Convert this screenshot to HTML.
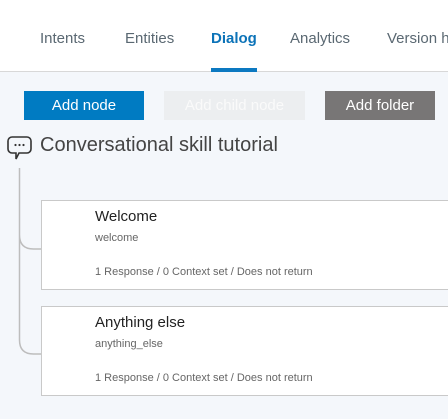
<!DOCTYPE html><html><head><style>
html{overflow:hidden}
body{margin:0;width:448px;height:419px;background:#f4f7fb;font-family:"Liberation Sans",sans-serif;position:relative;overflow:hidden}
.hd{position:absolute;left:0;top:0;width:448px;height:71px;background:#fff;border-bottom:1px solid #d8d8d8}
.t{position:absolute;top:30px;font-size:15px;color:#5a6872;white-space:nowrap}
.b{position:absolute;top:91px;height:29px;line-height:29px;text-align:center;font-size:15px;color:#fff}
.c{position:absolute;left:41px;width:406px;border-right:none;background:#fff;border:1px solid #c9c9c9;border-right:none;height:88px}
.c .n{position:absolute;left:53px;top:7px;font-size:15px;color:#222}
.c .s{position:absolute;left:53px;top:31px;font-size:11px;color:#666}
.c .f{position:absolute;left:53px;top:65px;font-size:11px;color:#666}
</style></head><body>
<div class="hd">
<div class="t" style="left:40px">Intents</div>
<div class="t" style="left:125px">Entities</div>
<div class="t" style="left:211px;color:#0c73b8;font-weight:bold">Dialog</div>
<div class="t" style="left:290px">Analytics</div>
<div class="t" style="left:387px;width:61px;overflow:hidden">Version history</div>
<div style="position:absolute;left:211px;top:68px;width:46px;height:4px;background:#0c79c1"></div>
</div>
<div class="b" style="left:24px;width:120px;background:#007bc2">Add node</div>
<div class="b" style="left:164px;width:141px;background:#eceef0;color:#fafafa">Add child node</div>
<div class="b" style="left:325px;width:110px;background:#787676">Add folder</div>
<svg style="position:absolute;left:7px;top:135px" width="28" height="26" viewBox="0 0 28 26"><path d="M5 2h15a4 4 0 0 1 4 4v8a4 4 0 0 1-4 4h-8l-3 6v-6H5a4 4 0 0 1-4-4V6a4 4 0 0 1 4-4z" fill="none" stroke="#333" stroke-width="1.6"/><circle cx="8.5" cy="10" r="1.1" fill="#333"/><circle cx="12.5" cy="10" r="1.1" fill="#333"/><circle cx="16.5" cy="10" r="1.1" fill="#333"/></svg>
<div style="position:absolute;left:40px;top:134px;font-size:20px;color:#444;white-space:nowrap">Conversational skill tutorial</div>
<svg style="position:absolute;left:0;top:160px" width="50" height="200"><path d="M19.5 8V75q0 14 14 14H41M19.5 75V180q0 14 14 14H41" fill="none" stroke="#bdbdbd" stroke-width="1.5"/></svg>
<div class="c" style="top:200px"><div class="n">Welcome</div><div class="s">welcome</div><div class="f">1 Response / 0 Context set / Does not return</div></div>
<div class="c" style="top:306px"><div class="n">Anything else</div><div class="s">anything_else</div><div class="f">1 Response / 0 Context set / Does not return</div></div>
</body></html>
